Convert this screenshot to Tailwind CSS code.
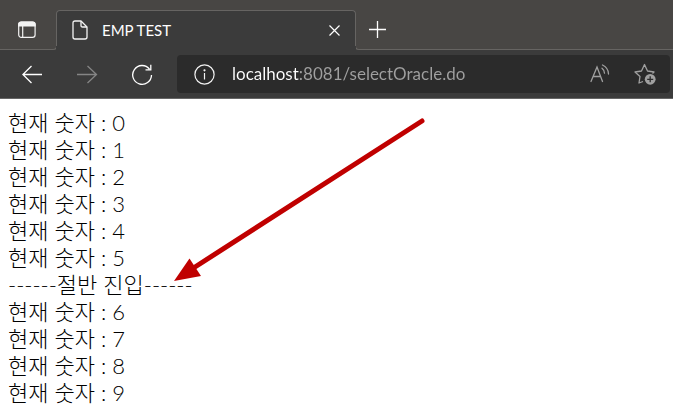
<!DOCTYPE html>
<html lang="ko">
<head>
    <meta charset="UTF-8">
    <meta name="viewport" content="width=device-width, initial-scale=1.0">
    <title>EMP TEST</title>
    <script src="https://cdn.jsdelivr.net/npm/@tailwindcss/browser@4"></script>
</head>
<body class="min-h-screen bg-white font-['Lato','Noto_Sans_CJK_KR',sans-serif]">
    <header class="bg-[#3b3b3b] text-white border-b border-[#666666]">
        <!-- tab strip -->
        <div class="flex items-end h-[50px] bg-[#484644]">
            <div class="flex items-end w-[57px] h-full">
                <div class="flex w-full h-[30px] pl-[18px] border-b border-r border-[#666462] rounded-br-sm">
                    <button aria-label="Tab actions" class="size-[18px]">
                        <svg class="size-[18px]" viewBox="0 0 18 18" fill="none" stroke="#f3f3f3" stroke-width="1.2">
                            <rect x=".7" y="2" width="16.4" height="15.4" rx="2.6"/>
                            <path d="M.7 6V4.6Q.7 2 3.3 2h11.2q2.6 0 2.6 2.6V6Z" fill="#f3f3f3"/>
                            <path d="M4.7 6v11.4"/>
                        </svg>
                    </button>
                </div>
            </div>
            <div class="relative flex items-center w-[300px] h-10 -mx-px px-4 bg-[#3b3b3b] rounded-t">
                <div class="absolute inset-x-0 top-0 h-9 border-x border-t border-[#666462] rounded-t pointer-events-none"></div>
                <svg class="w-4 h-5 shrink-0" viewBox="0 0 16 20" fill="none" stroke="#f3f3f3" stroke-width="1.3" stroke-linejoin="round">
                    <path d="M9 1H3Q1 1 1 3v14q0 2 2 2h10q2 0 2-2V7Z"/>
                    <path d="M9 1v4.5q0 1.5 1.5 1.5H15"/>
                </svg>
                <span class="ml-[14px] text-[15px] leading-5">EMP TEST</span>
                <button aria-label="Close tab" class="ml-auto">
                    <svg class="size-[11px]" viewBox="0 0 11 11" fill="none" stroke="#ffffff" stroke-width="1.2">
                        <path d="M.5.5l10 10M10.5.5l-10 10"/>
                    </svg>
                </button>
            </div>
            <div class="flex items-end flex-1 h-full">
                <div class="flex w-full h-[30px] pl-3 border-b border-l border-[#666462] rounded-bl-sm">
                    <button aria-label="New tab" class="size-[18px]">
                        <svg class="size-[18px]" viewBox="0 0 18 18" fill="none" stroke="#ffffff" stroke-width="1.3">
                            <path d="M9.5 1v17M1 9.5h17"/>
                        </svg>
                    </button>
                </div>
            </div>
        </div>
        <!-- toolbar -->
        <div class="flex items-center h-12 pl-[22px] pr-[3px]">
            <nav class="flex items-center gap-[34px]">
                <button aria-label="Back">
                    <svg class="size-[21px]" viewBox="0 0 21 21" fill="none" stroke="#ffffff" stroke-width="1.3">
                        <path d="M9.5 2L.9 10.5l8.6 8.5M.9 10.5H20"/>
                    </svg>
                </button>
                <button aria-label="Forward" disabled>
                    <svg class="size-[21px]" viewBox="0 0 21 21" fill="none" stroke="#858585" stroke-width="1.3">
                        <path d="M10.5 2l9 8.5-9 8.5M19.5 10.5H0"/>
                    </svg>
                </button>
                <button aria-label="Refresh">
                    <svg class="size-[21px]" viewBox="0 0 21 21" fill="none" stroke="#ffffff" stroke-width="1.3">
                        <path d="M19.5 11A9.4 9.4 0 1 1 17.5 5.1M18.8.8v5h-5.3"/>
                    </svg>
                </button>
            </nav>
            <div class="flex items-center flex-1 h-[38px] ml-6 pl-[17px] pr-[14px] bg-[#2b2b2b] rounded">
                <button aria-label="View site information">
                    <svg class="size-[21px]" viewBox="0 0 21 21" fill="none" stroke="#f3f3f3" stroke-width="1.2">
                        <circle cx="10.5" cy="10.5" r="9.6"/>
                        <path d="M10.5 9v6.5"/>
                        <circle cx="10.5" cy="6.3" r=".5" fill="#f3f3f3"/>
                    </svg>
                </button>
                <input type="text" aria-label="Address" value="localhost:8081/selectOracle.do" spellcheck="false"
                    class="flex-1 min-w-0 ml-[17px] text-[17px] leading-7 text-transparent caret-white outline-none bg-clip-text bg-[linear-gradient(to_right,#ffffff_67px,#a0a0a0_67px)]">
                <div class="flex items-center gap-6">
                    <button aria-label="Read aloud">
                        <svg class="w-5 h-[21px]" viewBox="0 0 20 21" fill="none" stroke="#a0a0a0" stroke-width="1.3" stroke-linecap="round">
                            <path d="M1 17.5L7 3l5.5 14.5M3 12.5h7.5"/>
                            <path d="M12 4.2q2.5 1.9 2.5 5M12.5 1q6 3 6 9"/>
                        </svg>
                    </button>
                    <button aria-label="Add this page to favorites">
                        <svg class="size-[22px]" viewBox="0 0 22 22" fill="none" stroke="#a0a0a0" stroke-width="1.3" stroke-linejoin="round">
                            <path d="M9 18.5l-4 1.5 1-6.5L1 9l6.5-1L10.5 1.5l3 6.5 6.5 1-1.5 1.5"/>
                            <circle cx="16.2" cy="16.3" r="5.4" fill="#a0a0a0" stroke="none"/>
                            <path d="M16.2 13.3v6M13.2 16.3h6" stroke="#2b2b2b"/>
                        </svg>
                    </button>
                </div>
            </div>
        </div>
    </header>
    <main class="relative px-2 pt-[10px] text-[22px] leading-[27px] font-light text-black">
        <p>현재 숫자 : 0</p>
        <p>현재 숫자 : 1</p>
        <p>현재 숫자 : 2</p>
        <p>현재 숫자 : 3</p>
        <p>현재 숫자 : 4</p>
        <p>현재 숫자 : 5</p>
        <p>------절반 진입------</p>
        <p>현재 숫자 : 6</p>
        <p>현재 숫자 : 7</p>
        <p>현재 숫자 : 8</p>
        <p>현재 숫자 : 9</p>
        <!-- arrow to the halfway line -->
        <svg class="absolute left-[170px] top-4 w-[260px] h-[170px] pointer-events-none" viewBox="0 0 260 170" fill="#c00000">
            <path d="M252 6L25 152" stroke="#c00000" stroke-width="5" stroke-linecap="round"/>
            <path d="M4 166L19.5 143.5L31 161Z"/>
        </svg>
    </main>
</body>
</html>
